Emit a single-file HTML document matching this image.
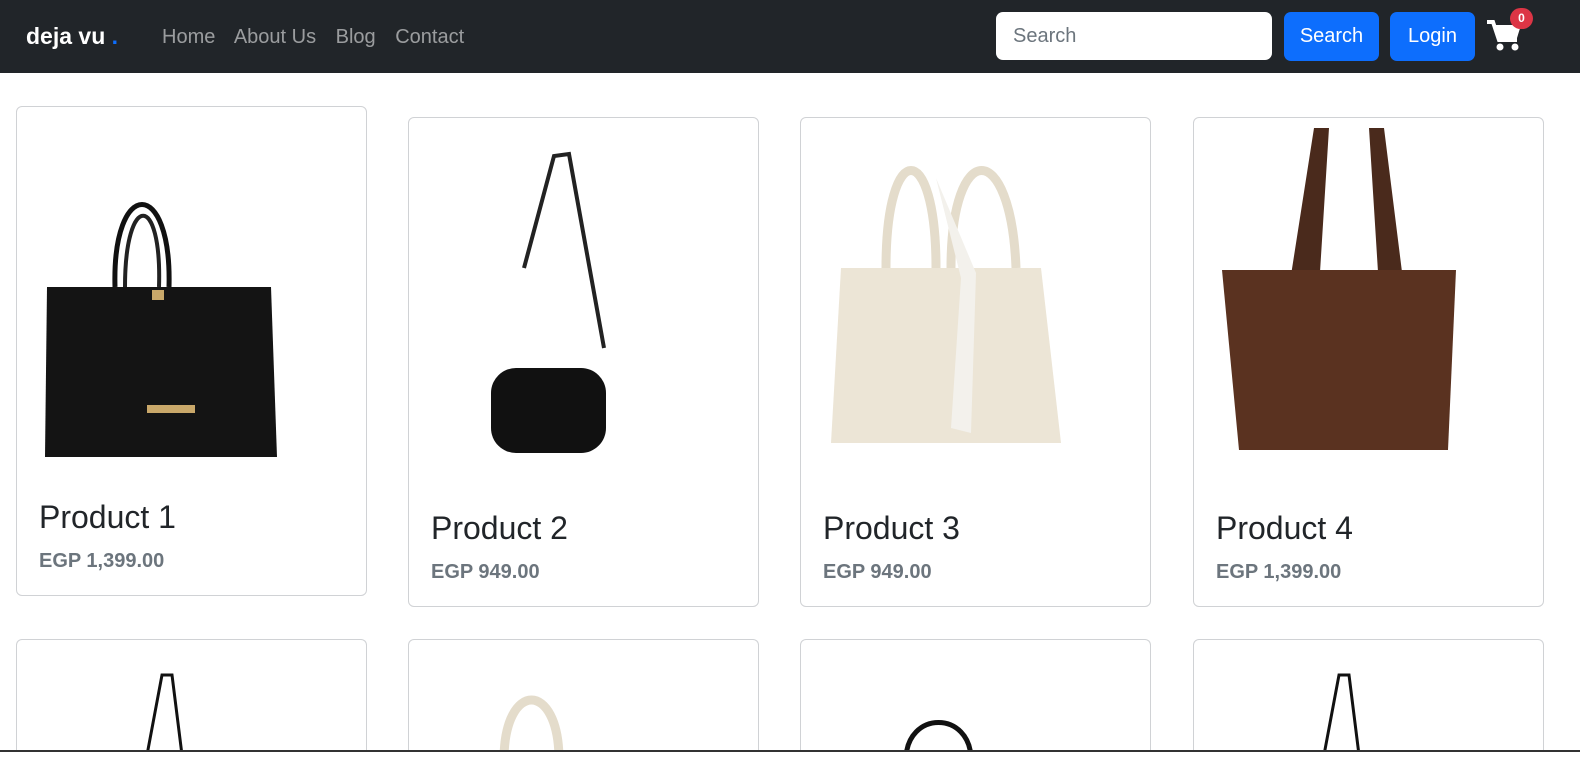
<!DOCTYPE html>
<html style="height:758px;overflow:hidden"><head><style>
body{margin:0;width:1580px;height:758px;overflow:hidden;background:#fff;font-family:"Liberation Sans",sans-serif;position:relative}
nav{position:absolute;left:0;top:0;width:1580px;height:73px;background:#212529}
.brand{position:absolute;left:26px;top:23px;color:#fff;font-weight:bold;font-size:23px}
.brand span{color:#0d6efd}
.links{position:absolute;left:162px;top:26px;font-size:20px;color:rgba(255,255,255,.55)}
.links span{margin-right:14px}
.search{position:absolute;left:996px;top:12px;width:276px;height:48px;background:#fff;border-radius:7px;box-sizing:border-box;padding:13px 17px;font-size:20px;color:#6c757d}
.btn{position:absolute;top:12px;height:49px;background:#0d6efd;color:#fff;border-radius:7px;font-size:20px;line-height:49px;text-align:center}
.badge{position:absolute;left:1510px;top:8px;width:23px;height:21px;border-radius:11px;background:#dc3545;color:#fff;font-size:12px;font-weight:bold;text-align:center;line-height:21px}
.card{position:absolute;width:349px;border:1px solid #d0d2d5;border-radius:6px}
.card h2{position:absolute;left:22px;margin:0;font-weight:normal;font-size:32px;color:#212529}
.card p{position:absolute;left:22px;margin:0;font-weight:bold;font-size:20px;color:#6c757d}
.r2{border-bottom:none;border-radius:6px 6px 0 0;height:111px}
</style></head><body>
<div class="card" style="left:16px;top:106px;height:488px">
<svg style="position:absolute;left:0;top:0" width="349" height="380"><path d="M98 180 C95 70 155 70 152 180" fill="none" stroke="#111" stroke-width="5"/><path d="M108 180 C108 85 145 85 142 180" fill="none" stroke="#222" stroke-width="4"/><path d="M30 180h224l6 170H28z" fill="#141414"/><rect x="130" y="298" width="48" height="8" fill="#c9a86a"/><rect x="135" y="183" width="12" height="10" fill="#c9a86a"/></svg>
<h2 style="top:392px">Product 1</h2><p style="top:443px">EGP 1,399.00</p></div>

<div class="card" style="left:408px;top:117px;height:488px">
<svg style="position:absolute;left:0;top:0" width="349" height="380"><path d="M115 150 L145 38 L160 36 L195 230" fill="none" stroke="#222" stroke-width="4"/><rect x="82" y="250" width="115" height="85" rx="25" fill="#111"/></svg>
<h2 style="top:392px">Product 2</h2><p style="top:443px">EGP 949.00</p></div>

<div class="card" style="left:800px;top:117px;height:488px">
<svg style="position:absolute;left:0;top:0" width="349" height="380"><path d="M85 150 C85 20 135 20 135 150" fill="none" stroke="#e4dccb" stroke-width="9"/><path d="M150 150 C150 20 210 20 215 150" fill="none" stroke="#e4dccb" stroke-width="9"/><path d="M40 150h200l20 175H30z" fill="#ece5d6"/><path d="M135 60l25 100-10 150 20 5 5-160z" fill="#f3f1ec"/></svg>
<h2 style="top:392px">Product 3</h2><p style="top:443px">EGP 949.00</p></div>

<div class="card" style="left:1193px;top:117px;height:488px">
<svg style="position:absolute;left:0;top:0" width="349" height="380"><path d="M95 170 L120 10 L135 10 L125 170" fill="#4a2a1c"/><path d="M185 170 L175 10 L190 10 L210 170" fill="#4a2a1c"/><path d="M28 152h234l-8 180H45z" fill="#5a3220"/></svg>
<h2 style="top:392px">Product 4</h2><p style="top:443px">EGP 1,399.00</p></div>

<div class="card r2" style="left:16px;top:639px"><svg width="349" height="110"><path d="M130 115 L145 35 L155 35 L165 115" fill="none" stroke="#111" stroke-width="3"/></svg></div>
<div class="card r2" style="left:408px;top:639px"><svg width="349" height="110"><path d="M95 120 C95 40 150 40 150 120" fill="none" stroke="#e4dccb" stroke-width="9"/></svg></div>
<div class="card r2" style="left:800px;top:639px"><svg width="349" height="110"><path d="M105 120 C105 70 170 70 170 120" fill="none" stroke="#111" stroke-width="5"/></svg></div>
<div class="card r2" style="left:1193px;top:639px"><svg width="349" height="110"><path d="M130 115 L145 35 L155 35 L165 115" fill="none" stroke="#111" stroke-width="3"/></svg></div>
<div style="position:absolute;left:0;top:750px;width:1580px;height:8px;background:#fff;border-top:2px solid #333;box-sizing:border-box"></div>
<nav>
<div class="brand">deja vu <span>.</span></div>
<div class="links"><span>Home</span> <span>About Us</span> <span>Blog</span> <span>Contact</span></div>
<div class="search">Search</div>
<div class="btn" style="left:1284px;width:95px">Search</div>
<div class="btn" style="left:1390px;width:85px">Login</div>
<svg style="position:absolute;left:1486px;top:19px" width="36" height="32" viewBox="0 0 36 32"><path d="M1 3h6l6 18h18" fill="none" stroke="#fff" stroke-width="4"/><path d="M8 6h27l-4 13H13z" fill="#fff"/><circle cx="14" cy="28" r="3.5" fill="#fff"/><circle cx="29" cy="28" r="3.5" fill="#fff"/></svg>
<div class="badge">0</div>
</nav>
</body></html>
